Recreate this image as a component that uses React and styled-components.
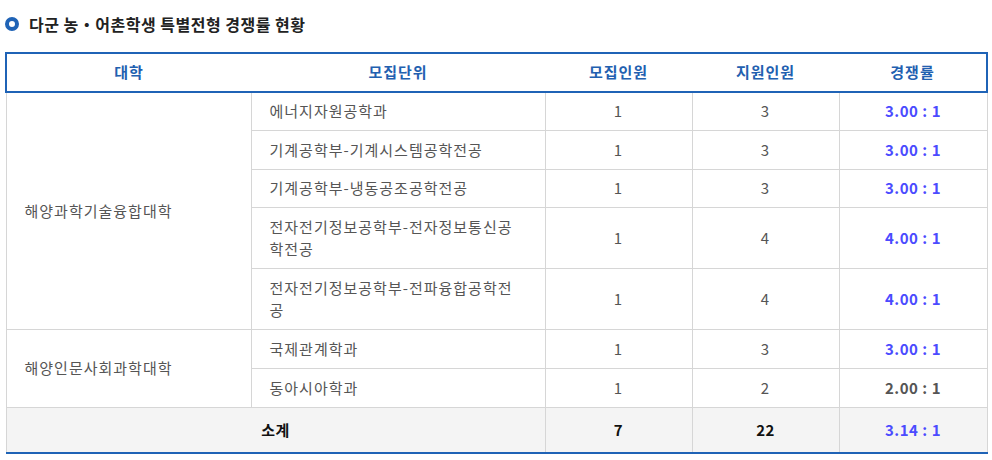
import React from "react";
import styled, { createGlobalStyle } from "styled-components";

const GlobalStyle = createGlobalStyle`
  html, body {
    margin: 0;
    padding: 0;
    background: #fff;
  }
  body {
    font-family: "Noto Sans CJK KR", "Noto Sans", sans-serif;
  }
`;

const Page = styled.div`
  padding: 13px 6px 0 5px;
`;

const Title = styled.h3`
  display: flex;
  align-items: center;
  gap: 10px;
  margin: 0 0 17px 0;
  font-size: 16px;
  line-height: 22px;
  letter-spacing: 0.5px;
  font-weight: 700;
  color: #222;
`;

const Bullet = styled.span`
  width: 14px;
  height: 14px;
  box-sizing: border-box;
  border: 4px solid #1f63b6;
  border-radius: 50%;
  flex-shrink: 0;
`;

const Table = styled.table`
  width: 981px;
  border-collapse: collapse;
  table-layout: fixed;
  font-size: 15px;
  line-height: 22.5px;
  letter-spacing: 1px;
`;

const Th = styled.th`
  padding: 7px 0;
  font-weight: 600;
  color: #2260b0;
  text-align: center;
  border-top: 2px solid #1f63b6;
  border-bottom: 2px solid #1f63b6;
  &:first-child {
    border-left: 2px solid #1f63b6;
  }
  &:last-child {
    border-right: 2px solid #1f63b6;
  }
`;

const Td = styled.td`
  padding: 7.55px 20px 7.55px ${(props) => (props.left ? "18px" : "20px")};
  border: 1px solid #d6d6d6;
  color: #555;
  text-align: ${(props) => (props.left ? "left" : "center")};
  vertical-align: middle;
  word-break: break-all;
`;

const Ratio = styled(Td)`
  font-weight: 700;
  letter-spacing: 0.5px;
  color: ${(props) => (props.dim ? "#555" : "#4b4bff")};
`;

const TotalTd = styled.td`
  padding: 11px 0;
  background: #f4f4f4;
  border: 1px solid #d6d6d6;
  border-bottom: 2px solid #1f63b6;
  text-align: center;
  font-weight: 700;
  letter-spacing: 0.5px;
  color: ${(props) => (props.blue ? "#4b4bff" : "#111")};
`;

const groups = [
  {
    college: "해양과학기술융합대학",
    rows: [
      ["에너지자원공학과", 1, 3, "3.00 : 1"],
      ["기계공학부-기계시스템공학전공", 1, 3, "3.00 : 1"],
      ["기계공학부-냉동공조공학전공", 1, 3, "3.00 : 1"],
      ["전자전기정보공학부-전자정보통신공학전공", 1, 4, "4.00 : 1"],
      ["전자전기정보공학부-전파융합공학전공", 1, 4, "4.00 : 1"],
    ],
  },
  {
    college: "해양인문사회과학대학",
    rows: [
      ["국제관계학과", 1, 3, "3.00 : 1"],
      ["동아시아학과", 1, 2, "2.00 : 1", true],
    ],
  },
];

const App = () => {
  return (
    <Page>
      <GlobalStyle />
      <Title>
        <Bullet />
        다군 농・어촌학생 특별전형 경쟁률 현황
      </Title>
      <Table>
        <colgroup>
          <col style={{ width: 245 }} />
          <col style={{ width: 294 }} />
          <col style={{ width: 147 }} />
          <col style={{ width: 147 }} />
          <col style={{ width: 148 }} />
        </colgroup>
        <thead>
          <tr>
            <Th>대학</Th>
            <Th>모집단위</Th>
            <Th>모집인원</Th>
            <Th>지원인원</Th>
            <Th>경쟁률</Th>
          </tr>
        </thead>
        <tbody>
          {groups.map((g) =>
            g.rows.map((r, i) => (
              <tr key={g.college + r[0]}>
                {i === 0 && (
                  <Td left rowSpan={g.rows.length}>
                    {g.college}
                  </Td>
                )}
                <Td left>{r[0]}</Td>
                <Td>{r[1]}</Td>
                <Td>{r[2]}</Td>
                <Ratio dim={r[4]}>{r[3]}</Ratio>
              </tr>
            ))
          )}
        </tbody>
        <tfoot>
          <tr>
            <TotalTd colSpan={2}>소계</TotalTd>
            <TotalTd>7</TotalTd>
            <TotalTd>22</TotalTd>
            <TotalTd blue>3.14 : 1</TotalTd>
          </tr>
        </tfoot>
      </Table>
    </Page>
  );
};

export default App;
